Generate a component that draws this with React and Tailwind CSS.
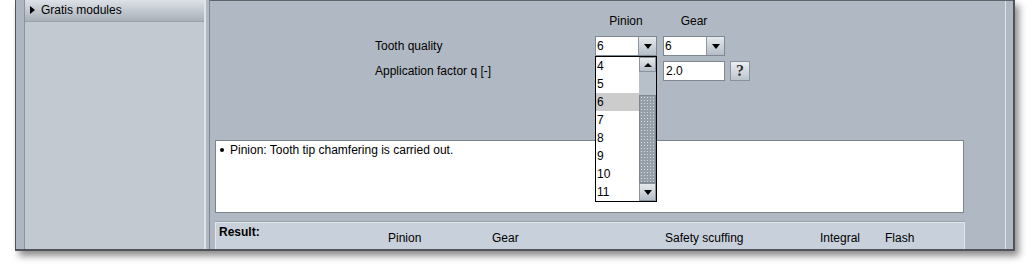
const FONT = "font-['Liberation_Sans',Arial,sans-serif]";

const QUALITY_ITEMS = ["4", "5", "6", "7", "8", "9", "10", "11"];

function DownTriangle() {
  return <span className="h-0 w-0 border-x-[4px] border-t-[5px] border-x-transparent border-t-black" />;
}

function UpTriangle() {
  return <span className="h-0 w-0 border-x-[4px] border-b-[4px] border-x-transparent border-b-black" />;
}

function ArrowButton({ className = "", children }) {
  return (
    <div className={`flex items-center justify-center bg-gradient-to-b from-[#e6eaee] to-[#b4bdc6] ${className}`}>
      {children}
    </div>
  );
}

function ComboBox({ value, open }) {
  return (
    <div className="relative w-[62px] h-[20px]">
      <div className="flex h-full border border-[#7f8891] bg-white">
        <div className="flex-1 pl-[1px] leading-[18px]">{value}</div>
        <ArrowButton className="w-[18px] border-l border-[#8e97a0]">
          <DownTriangle />
        </ArrowButton>
      </div>
      {open ? (
        <div className="absolute left-0 top-full z-10 flex w-[62px] h-[146px] border border-black bg-white">
          <div className="flex-1">
            {QUALITY_ITEMS.map((item) => (
              <div key={item} className={`h-[18px] pl-[1px] leading-[18px] ${item === value ? "bg-[#cccccc]" : ""}`}>
                {item}
              </div>
            ))}
          </div>
          <div className="flex w-[17px] flex-col bg-[#b7bfc8]">
            <ArrowButton className="h-[15px] border border-[#8a939c]">
              <UpTriangle />
            </ArrowButton>
            <div className="h-[23px]" />
            <div className="h-[88px] border border-[#7d858e] bg-[#969ea7] bg-[radial-gradient(#d4d9de_0.8px,transparent_0.8px)] bg-[length:3px_3px]" />
            <ArrowButton className="h-[18px] border border-[#8a939c]">
              <DownTriangle />
            </ArrowButton>
          </div>
        </div>
      ) : null}
    </div>
  );
}

export default function App() {
  return (
    <div className={`relative h-[266px] w-[1030px] overflow-hidden bg-white text-[12px] text-black ${FONT}`}>
      <div className="ml-[15px] flex h-[251px] w-[1000px] border-l border-r-2 border-b-2 border-[#505459] shadow-[4px_5px_7px_rgba(0,0,0,0.45)]">
        <div className="w-[9px] border-r border-[#8a929b] bg-[#aeb7c1]" />

        <aside className="flex w-[179px] flex-col bg-[#c2c9d1]">
          <div className="flex h-[22px] items-center gap-[6px] border-b border-[#99a1a9] bg-gradient-to-b from-[#dde2e7] to-[#a8b0b9] pl-[5px] pb-[2px]">
            <span className="h-0 w-0 border-y-[4px] border-l-[5px] border-y-transparent border-l-black" />
            <span>Gratis modules</span>
          </div>
        </aside>

        <div className="w-[2px] bg-[#dfe4e9]" />
        <div className="w-[3px] bg-[#b0b8c1]" />
        <div className="w-[1px] bg-[#7e868f]" />

        <main className="flex w-[795px] flex-col border-t border-[#5f646a] bg-[#b0b9c3]">
          <div className="ml-[385px] mt-[13px] flex h-[14px] gap-[6px] leading-[14px]">
            <span className="w-[62px] text-center">Pinion</span>
            <span className="w-[62px] text-center">Gear</span>
          </div>

          <div className="mt-[8px] flex h-[20px] items-center">
            <span className="ml-[165px] w-[220px]">Tooth quality</span>
            <ComboBox value="6" open />
            <div className="ml-[6px]">
              <ComboBox value="6" />
            </div>
          </div>

          <div className="mt-[5px] flex h-[20px] items-center">
            <span className="ml-[165px] w-[288px]">Application factor q [-]</span>
            <div className="h-[20px] w-[62px] border border-[#7f8891] bg-white pl-[2px] leading-[18px]">2.0</div>
            <div className="ml-[5px] flex h-[20px] w-[20px] items-center justify-center border border-[#8a939c] bg-gradient-to-b from-[#eceff2] to-[#bcc4cc] font-['Liberation_Serif',serif] text-[16px] font-bold leading-none text-[#333]">
              ?
            </div>
          </div>

          <div className="ml-[5px] mt-[59px] h-[73px] w-[749px] border border-[#7c848d] bg-white px-[4px] pt-[2px]">
            <div className="flex items-center leading-[14px]">
              <span className="h-[4px] w-[4px] rounded-full bg-black" />
              <span className="ml-[6px]">Pinion: Tooth tip chamfering is carried out.</span>
            </div>
          </div>

          <div className="ml-[5px] mt-[9px] flex w-[750px] flex-1 border-x border-t border-[#e2e7ec] bg-[#c8d1db] leading-[14px] shadow-[0_-1px_0_#9aa2ab]">
            <span className="w-[172px] pl-[3px] pt-[2px] font-bold">Result:</span>
            <span className="mt-[8px] w-[104px]">Pinion</span>
            <span className="mt-[8px] w-[173px]">Gear</span>
            <span className="mt-[8px] w-[155px]">Safety scuffing</span>
            <span className="mt-[8px] w-[65px]">Integral</span>
            <span className="mt-[8px]">Flash</span>
          </div>
        </main>

        <div className="w-[1px] border-t border-[#5f646a] bg-[#dfe4e9]" />
        <div className="w-[7px] border-t border-[#5f646a] bg-[#b0b8c1]" />
      </div>
    </div>
  );
}
